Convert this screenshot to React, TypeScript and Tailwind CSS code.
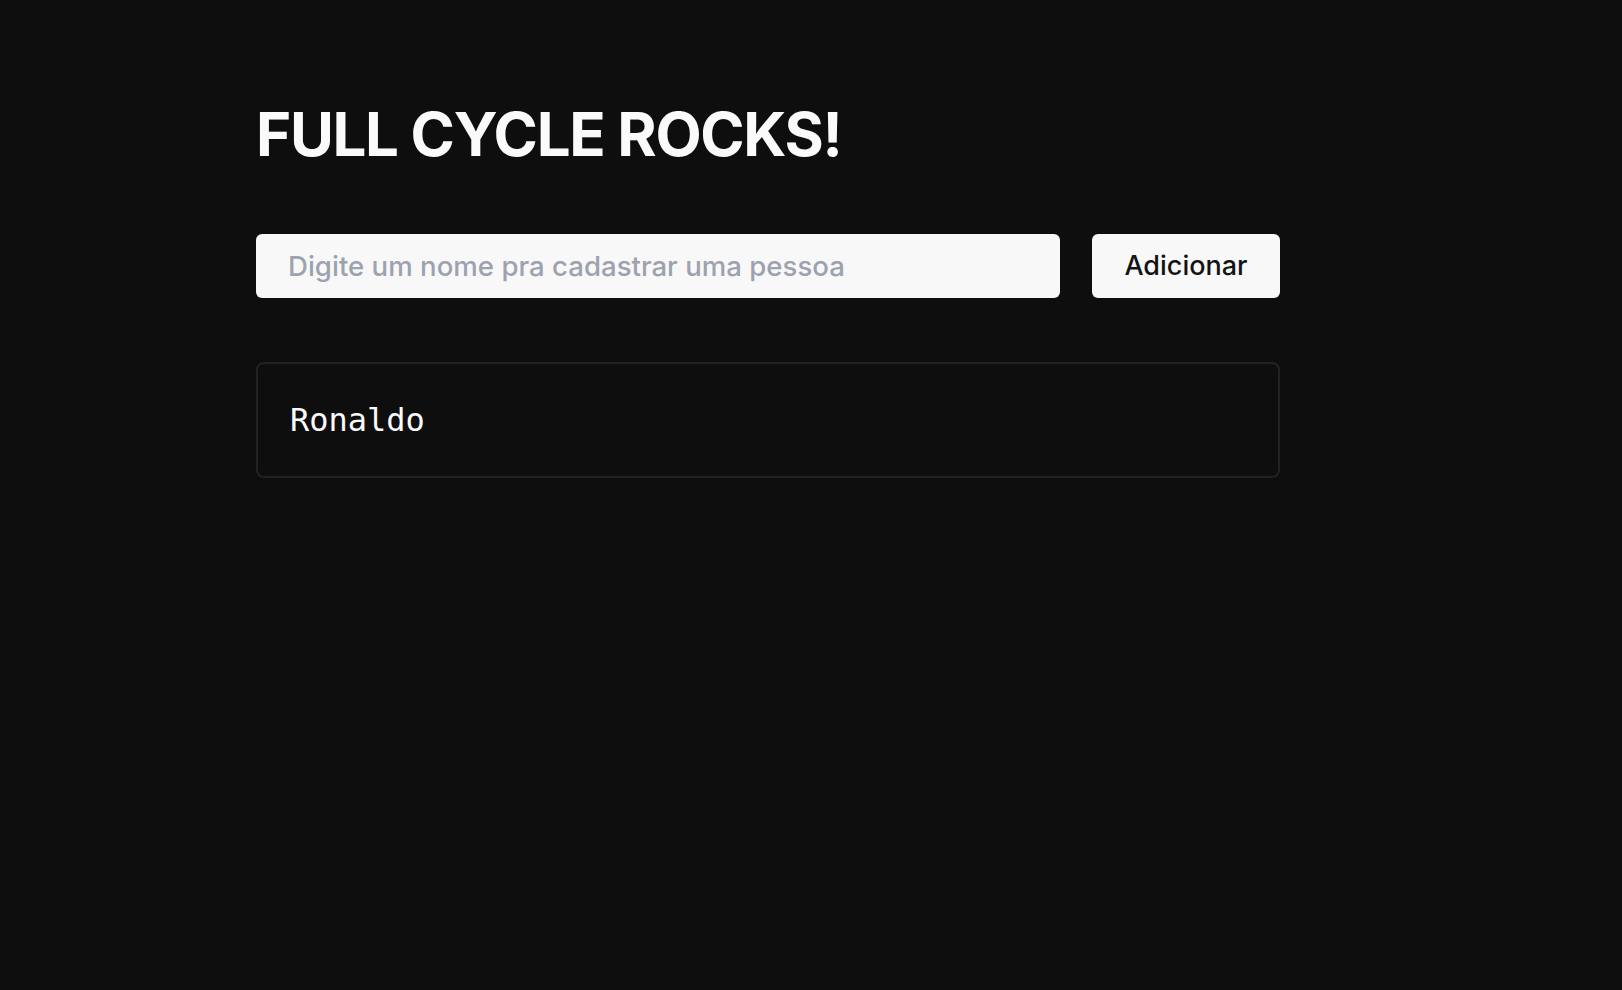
import React, { useState } from "react";

export default function App() {
  const [name, setName] = useState("");
  const [people, setPeople] = useState<string[]>(["Ronaldo"]);

  const add = () => {
    const n = name.trim();
    if (!n) return;
    setPeople((p) => [...p, n]);
    setName("");
  };

  return (
    <div
      className="min-h-screen w-full bg-[#0e0e0e] text-[#f9f9f9]"
      style={{ fontFamily: "Inter, 'Noto Sans', sans-serif" }}
    >
      <div className="ml-[256px] w-[1024px] pt-[104px]">
        <h1 className="text-[60px] leading-[60px] font-bold tracking-[-0.022em] text-[#fafafa]">
          FULL CYCLE ROCKS!
        </h1>

        <div className="mt-[70px] flex gap-8">
          <input
            value={name}
            onChange={(e) => setName(e.target.value)}
            placeholder="Digite um nome pra cadastrar uma pessoa"
            className="h-[64px] flex-1 rounded-md bg-[#f8f8f8] px-8 text-[27.6px] font-medium text-[#111] outline-none placeholder:text-[#9ca3af]"
          />
          <button
            onClick={add}
            className="h-[64px] w-[188px] rounded-md bg-[#f8f8f8] text-[27px] font-medium text-[#141414]"
          >
            Adicionar
          </button>
        </div>

        <ul className="mt-16 flex flex-col gap-4">
          {people.map((p, i) => (
            <li
              key={i}
              className="rounded-lg border-2 border-[#222222] px-8 py-8 text-[32px] leading-[48px] text-[#fafafa]"
              style={{ fontFamily: "'DejaVu Sans Mono', 'Liberation Mono', monospace" }}
            >
              {p}
            </li>
          ))}
        </ul>
      </div>
    </div>
  );
}
